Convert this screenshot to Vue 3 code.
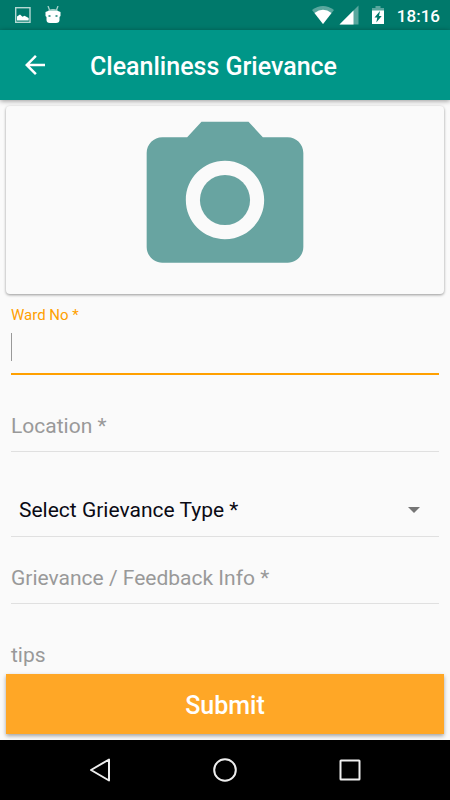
<template>
  <div class="screen">
    <div class="status-bar">
      <div class="status-bar__group status-bar__group--left">
        <svg width="16" height="18" viewBox="0 0 16 18">
          <rect x="0.7" y="1.7" width="14.300" height="14.600" fill="none" stroke="#b5d9d3" stroke-width="1.400" />
          <path d="M2 14.500v-4L5 8.500l2.500 2.200 2-1 4.200 2.300v2.500z" fill="#fff" />
        </svg>
        <svg width="16" height="18" viewBox="0 0 16 18">
          <path d="M3 0l1.500 4M13 0l-1.500 4" stroke="#a9d3cc" stroke-width="1.300" />
          <path d="M3 5.500Q3 3 8 3t5 2.500z" fill="#a9d3cc" />
          <path d="M0.500 6l2.500-1h10l2.500 1v4l-1 1v3q0 3-3.500 3h-6q-3.500 0-3.500-3v-3l-1-1z" fill="#fff" />
          <path d="M3.500 9h2v2h-2zM10.500 9h2v2h-2z" fill="#4d9f95" />
        </svg>
      </div>
      <div class="status-bar__group">
        <svg width="22" height="20" viewBox="0 0 22 20">
          <path d="M0 5Q11-3 22 5L11 19z" fill="#fff" opacity="0.35" />
          <path d="M2.500 8Q11 1.500 19.500 8L11 19z" fill="#fff" />
        </svg>
        <svg width="20" height="20" viewBox="0 0 20 20">
          <path d="M19.500 0.500v19H0.500z" fill="#fff" opacity="0.35" />
          <path d="M14.500 5.500v14H0.500z" fill="#fff" />
        </svg>
        <svg class="status-bar__battery" width="12" height="18" viewBox="0 0 12 18">
          <path d="M3.500 0h5v2H12v3H0V2h3.500z" fill="#fff" opacity="0.35" />
          <path d="M0 4.500h12V18H0z" fill="#fff" />
          <path d="M8 5L2.500 11.500H5.300L4.300 16.500L9.700 10H7z" fill="#00796b" />
        </svg>
        <span class="status-bar__time">18:16</span>
      </div>
    </div>

    <header class="app-bar">
      <button type="button" class="app-bar__back" aria-label="Back">
        <svg width="30" height="30" viewBox="0 0 24 24" fill="#fff">
          <path d="M20 11H7.830l5.590-5.590L12 4l-8 8 8 8 1.410-1.410L7.830 13H20v-2z" />
        </svg>
      </button>
      <h1>Cleanliness Grievance</h1>
    </header>

    <form class="form" @submit.prevent>
      <div class="form__body">
        <button type="button" class="photo" aria-label="Add photo">
          <svg width="188" height="188" viewBox="0 0 24 24" fill="#68a4a1">
            <circle cx="12" cy="12" r="3.200" />
            <path d="M9 2L7.170 4H4c-1.100 0-2 .9-2 2v12c0 1.100.9 2 2 2h16c1.100 0 2-.9 2-2V6c0-1.100-.9-2-2-2h-3.170L15 2H9zm3 15c-2.760 0-5-2.240-5-5s2.240-5 5-5 5 2.240 5 5-2.240 5-5 5z" />
          </svg>
        </button>

        <div class="fields">
          <template v-for="field in fields" :key="field.id">
            <div v-if="field.type === 'select'" class="field field--select">
              <select :id="field.id" v-model="form[field.id]" class="field__control" :aria-label="field.label">
                <option value="">{{ field.label }}</option>
              </select>
              <svg class="field__arrow" width="12" height="6" viewBox="0 0 12 6" fill="#757575">
                <path d="M0 0h12L6 6z" />
              </svg>
            </div>
            <div
              v-else
              class="field"
              :class="{ 'field--active': active === field.id, 'field--filled': form[field.id] }"
            >
              <label class="field__label" :for="field.id">{{ field.label }}</label>
              <input
                :id="field.id"
                v-model="form[field.id]"
                class="field__control"
                type="text"
                @focus="active = field.id"
              >
              <span v-if="active === field.id && !form[field.id]" class="field__caret"></span>
            </div>
          </template>
        </div>
      </div>

      <button type="submit" class="submit">Submit</button>
    </form>

    <nav class="nav-bar">
      <button type="button" aria-label="Back">
        <svg width="26" height="26" viewBox="0 0 26 26">
          <path d="M22 2.500v21L4 13z" />
        </svg>
      </button>
      <button type="button" aria-label="Home">
        <svg width="26" height="26" viewBox="0 0 26 26">
          <circle cx="13" cy="13" r="10.800" />
        </svg>
      </button>
      <button type="button" aria-label="Recent apps">
        <svg width="26" height="26" viewBox="0 0 26 26">
          <rect x="3.500" y="3.500" width="19" height="19" rx="0.500" />
        </svg>
      </button>
    </nav>
  </div>
</template>

<script setup>
import { reactive, ref } from 'vue'

const fields = [
  { id: 'ward', label: 'Ward No *', type: 'text' },
  { id: 'location', label: 'Location *', type: 'text' },
  { id: 'grievanceType', label: 'Select Grievance Type *', type: 'select' },
  { id: 'info', label: 'Grievance / Feedback Info *', type: 'text' },
  { id: 'tips', label: 'tips', type: 'text' }
]

const form = reactive({
  ward: '',
  location: '',
  grievanceType: '',
  info: '',
  tips: ''
})

const active = ref('ward')
</script>

<style>
body {
  margin: 0;
  background: #fafafa;
}
</style>

<style scoped>
.screen {
  display: flex;
  flex-direction: column;
  height: 100vh;
  background: #fafafa;
  font-family: Roboto, "Liberation Sans", sans-serif;
}

.screen *,
.screen {
  box-sizing: border-box;
}

svg {
  display: block;
}

button {
  border: 0;
  padding: 0;
  background: none;
  font-family: inherit;
  cursor: pointer;
}

.status-bar {
  display: flex;
  justify-content: space-between;
  align-items: center;
  flex: none;
  height: 30px;
  padding: 0 10px 0 15px;
  background: #00796b;
  color: #fff;
}

.status-bar__group {
  display: flex;
  align-items: center;
  gap: 5px;
}

.status-bar__group--left {
  gap: 14px;
}

.status-bar__battery {
  margin: 0 8px;
}

.status-bar__time {
  padding-top: 2px;
  font-size: 17px;
  font-weight: 500;
  line-height: 28px;
}

.app-bar {
  display: flex;
  align-items: center;
  flex: none;
  gap: 40px;
  height: 70px;
  padding: 0 20px;
  background: #009688;
  box-shadow: 0 1px 5px rgba(0, 0, 0, 0.4);
  z-index: 1;
}

.app-bar h1 {
  margin: 0;
  padding-top: 4px;
  color: #fff;
  font-size: 25px;
  font-weight: 500;
  line-height: 32px;
}

.form {
  display: flex;
  flex-direction: column;
  flex: 1;
  min-height: 0;
}

.form__body {
  flex: 1;
  min-height: 0;
  padding: 6px 6px 0;
  overflow-y: auto;
  scrollbar-width: none;
}

.photo {
  display: flex;
  justify-content: center;
  width: 100%;
  border-radius: 4px;
  background: #fafafa;
  box-shadow: 0 1px 3px rgba(0, 0, 0, 0.4);
}

.fields {
  padding: 4px 5px 0;
}

.field {
  position: relative;
  padding-top: 26px;
}

.field__control {
  display: block;
  width: 100%;
  height: 51px;
  border: 0;
  border-bottom: 1px solid #e0e0e0;
  border-radius: 0;
  outline: 0;
  padding: 0;
  background: transparent;
  color: #0a0a14;
  font-family: inherit;
  font-size: 21px;
}

.field__label {
  position: absolute;
  left: 0;
  bottom: 14px;
  color: #999;
  font-size: 21px;
  line-height: 24px;
  pointer-events: none;
}

.field--active .field__label,
.field--filled .field__label {
  top: 8px;
  bottom: auto;
  font-size: 15px;
  line-height: 18px;
}

.field--active .field__label {
  color: #ffa000;
}

.field--active .field__control {
  border-bottom: 2px solid #ffa000;
  caret-color: transparent;
}

.field__caret {
  position: absolute;
  left: 0;
  bottom: 14px;
  width: 1px;
  height: 28px;
  background: #999;
}

.field--select {
  margin: 34px 0 -10px;
  padding: 0;
}

.field--select .field__control {
  padding: 0 40px 2px 8px;
  appearance: none;
}

.field__arrow {
  position: absolute;
  top: 21px;
  right: 19px;
  pointer-events: none;
}

.submit {
  flex: none;
  height: 60px;
  margin: 0 6px 6px;
  padding-top: 2px;
  background: #ffa726;
  box-shadow: 0 2px 4px rgba(0, 0, 0, 0.35);
  color: #fff;
  font-size: 25px;
  font-weight: 500;
  z-index: 1;
}

.nav-bar {
  display: grid;
  grid-template-columns: repeat(3, 1fr);
  flex: none;
  height: 60px;
  padding: 0 38px;
  background: #000;
  z-index: 2;
}

.nav-bar button {
  display: flex;
  justify-content: center;
  align-items: center;
}

.nav-bar svg {
  fill: none;
  stroke: #eee;
  stroke-width: 2;
  stroke-linejoin: round;
}
</style>
